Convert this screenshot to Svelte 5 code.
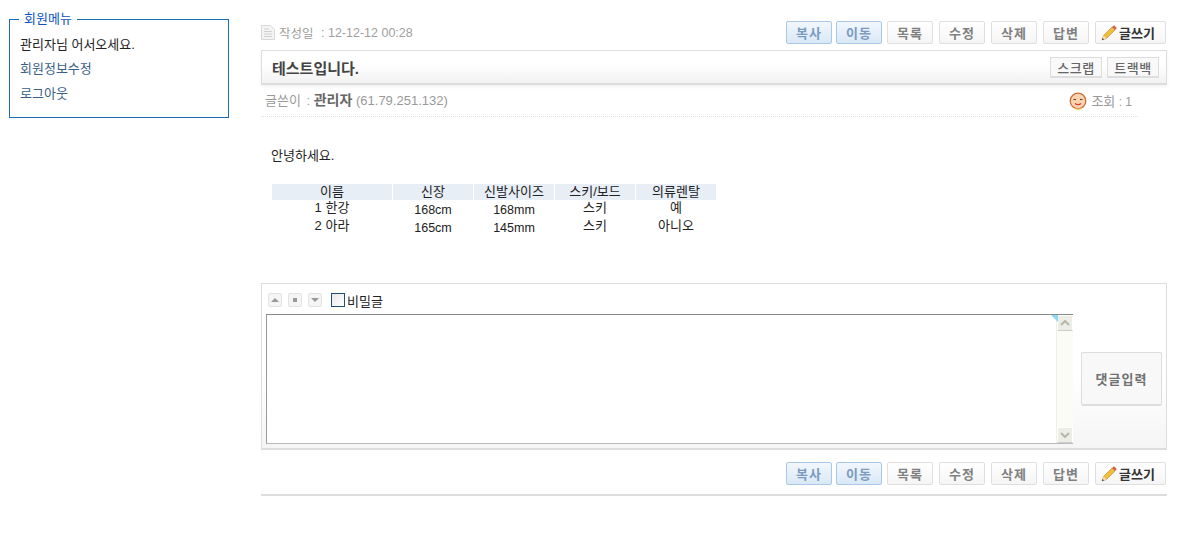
<script>
  const actions = [
    { label: '복사', tone: 'blue' },
    { label: '이동', tone: 'blue' },
    { label: '목록' },
    { label: '수정' },
    { label: '삭제' },
    { label: '답변' }
  ];

  const rows = [
    ['1 한강', '168cm', '168mm', '스키', '예'],
    ['2 아라', '165cm', '145mm', '스키', '아니오']
  ];
</script>

{#snippet toolbar()}
  <div class="actions">
    {#each actions as a}
      <button type="button" class="btn" class:blue={a.tone === 'blue'}>{a.label}</button>
    {/each}
    <button type="button" class="btn write">
      <svg width="16" height="16" viewBox="0 0 16 16">
        <path d="M1 15l1.500-4.500L11 2l3 3-8.500 8.500z" fill="#f3bd3a" stroke="#a9782a" stroke-width="0.5" />
        <path d="M11 2l1.300-1.300q.7-.5 1.300 0l1.700 1.700q.5.6 0 1.300L14 5z" fill="#d9604a" />
        <path d="M1 15l1.500-4.500 3 3z" fill="#f0dcb8" />
        <path d="M1 15l.6-2 1.400 1.400z" fill="#333" />
      </svg>
      글쓰기
    </button>
  </div>
{/snippet}

<div class="page">
  <aside class="side">
    <fieldset class="member">
      <legend>회원메뉴</legend>
      <p>관리자님 어서오세요.</p>
      <a href="#edit">회원정보수정</a>
      <a href="#logout">로그아웃</a>
    </fieldset>
  </aside>

  <main class="main">
    <div class="top">
      <span class="date">
        <svg class="doc" width="14" height="15" viewBox="0 0 14 15">
          <path d="M.5.5h9l4 4v10H.500z" fill="#f4f4f4" stroke="#d8d8d8" />
          <path d="M3 4h5M3 6.500h8M3 9h8M3 11.500h8" stroke="#d0d0d0" />
        </svg>
        <span class="ko">작성일</span> : 12-12-12 00:28
      </span>
      {@render toolbar()}
    </div>

    <div class="title">
      <h1>테스트입니다.</h1>
      <div class="title-btns">
        <button type="button" class="mini">스크랩</button>
        <button type="button" class="mini">트랙백</button>
      </div>
    </div>

    <div class="info">
      <span class="author"><span class="who">글쓴이</span> : <b>관리자</b> (61.79.251.132)</span>
      <span class="hits">
        <svg width="18" height="18" viewBox="0 0 18 18">
          <circle cx="9" cy="9" r="7.800" fill="#f9d3b0" stroke="#c9703a" stroke-width="1.300" />
          <path d="M5 16.500q4 1.500 8 0" fill="none" stroke="#f3d35a" stroke-width="1.200" />
          <path d="M4.500 7.500h2.500M11 7.500h2.500" stroke="#5a3a22" stroke-width="1.200" />
          <path d="M6 11.500q3 2.500 6 0" fill="none" stroke="#d8342a" stroke-width="1.200" />
        </svg>
        <span><span class="ko-13">조회</span> : 1</span>
      </span>
    </div>

    <div class="body">
      <p>안녕하세요.</p>
      <table>
        <thead>
          <tr>
            <th>이름</th>
            <th>신장</th>
            <th>신발사이즈</th>
            <th>스키/보드</th>
            <th>의류렌탈</th>
          </tr>
        </thead>
        <tbody>
          {#each rows as row}
            <tr>
              {#each row as cell}
                <td>{cell}</td>
              {/each}
            </tr>
          {/each}
        </tbody>
      </table>
    </div>

    <form class="comment">
      <div class="tools">
        <span class="tool"><i class="up"></i></span>
        <span class="tool"><i class="sq"></i></span>
        <span class="tool"><i class="down"></i></span>
        <label class="secret"><span class="check"></span>비밀글</label>
      </div>
      <div class="write-row">
        <div class="area">
          <textarea aria-label="댓글"></textarea>
          <div class="scroll">
            <span class="arrow">
              <svg width="10" height="6" viewBox="0 0 10 6"><path d="M1 5l4-4 4 4" fill="none" stroke="#b4b8aa" stroke-width="2" /></svg>
            </span>
            <span class="arrow">
              <svg width="10" height="6" viewBox="0 0 10 6"><path d="M1 1l4 4 4-4" fill="none" stroke="#b4b8aa" stroke-width="2" /></svg>
            </span>
          </div>
          <span class="corner"></span>
        </div>
        <button type="button" class="submit">댓글입력</button>
      </div>
    </form>

    <div class="bottom">
      {@render toolbar()}
    </div>
    <div class="rule"></div>
  </main>
</div>

<style>
  :global(body) {
    margin: 0;
    background: #fff;
    font-family: "Liberation Sans", "Noto Sans CJK KR", sans-serif;
    font-size: 12px;
    color: #222;
  }

  .page {
    display: flex;
    gap: 32px;
    padding: 12px 0 0 9px;
    align-items: flex-start;
  }

  .side {
    width: 220px;
    flex: none;
  }

  .member {
    margin: 0;
    padding: 10px 10px 11px;
    height: 106px;
    box-sizing: border-box;
    border: 1px solid #1a6db3;
    min-width: 0;
    font-size: 13px;
  }

  .member legend {
    margin-left: -1px;
    padding: 0 5px;
    color: #0a55bd;
    font-size: 13px;
    line-height: 14px;
  }

  .member p {
    margin: 0 0 6px;
    line-height: 18px;
    color: #222;
  }

  .member a {
    display: block;
    line-height: 18px;
    margin-bottom: 7px;
    color: #3a5f86;
    text-decoration: none;
  }

  .main {
    width: 906px;
    flex: none;
    padding-top: 9px;
  }

  .top {
    display: flex;
    justify-content: space-between;
    align-items: center;
    height: 23px;
  }

  .date {
    display: flex;
    align-items: center;
    gap: 4px;
    color: #a0a0a0;
    font-size: 12.500px;
    white-space: pre;
  }

  .actions {
    display: flex;
    gap: 4px;
    margin-right: 1px;
  }

  .btn {
    height: 23px;
    width: 46px;
    padding: 0;
    margin-left: 2px;
    box-sizing: border-box;
    border: 1px solid #dfdfdf;
    border-radius: 2px;
    background: linear-gradient(#fff, #f5f5f5);
    color: #808080;
    font: bold 13px "Noto Sans CJK KR", sans-serif;
    letter-spacing: 1px;
    line-height: 20px;
  }

  .btn.blue {
    margin-left: 0;
    border-color: #a9c8e6;
    background: linear-gradient(#f2f7fc, #d9e8f7);
    color: #7a9ac0;
  }

  .btn:nth-child(3) {
    margin-left: 1px;
  }

  .btn.write {
    width: 71px;
    display: flex;
    align-items: center;
    gap: 2px;
    padding-left: 5px;
    letter-spacing: 0;
    color: #333;
  }

  .title {
    margin-top: 6px;
    height: 35px;
    box-sizing: border-box;
    display: flex;
    justify-content: space-between;
    align-items: center;
    padding: 0 7px 0 10px;
    border: 1px solid #ddd;
    border-bottom-width: 2px;
    background: linear-gradient(#fff 40%, #f2f2f2);
    box-shadow: 0 2px 3px #f2f2f2;
  }

  .title h1 {
    margin: 0;
    font-size: 15px;
    font-weight: bold;
    color: #444;
  }

  .title-btns {
    display: flex;
    gap: 5px;
  }

  .mini {
    width: 52px;
    height: 21px;
    padding: 0;
    box-sizing: border-box;
    border: 1px solid #ddd;
    border-bottom-width: 2px;
    background: #f9f9f9;
    color: #666;
    font: 500 13px "Noto Sans CJK KR", sans-serif;
    letter-spacing: 0.500px;
  }

  .info {
    width: 877px;
    height: 32px;
    box-sizing: border-box;
    display: flex;
    justify-content: space-between;
    align-items: center;
    padding: 0 6px 0 4px;
    border-bottom: 1px dotted #ddd;
    color: #999;
    font-size: 13px;
  }

  .author {
    padding-bottom: 3px;
  }

  .who {
    font-size: 13px;
    margin-right: 2px;
  }

  .info b {
    color: #666;
    font-size: 14px;
  }

  .hits {
    display: flex;
    align-items: center;
    gap: 4px;
    font-size: 12px;
    white-space: pre;
  }

  .ko-13 {
    font-size: 13px;
  }

  .body {
    padding: 30px 0 0 10px;
    height: 166px;
    box-sizing: border-box;
    font-size: 13px;
  }

  .body p {
    margin: 0 0 19px;
    line-height: 18px;
  }

  table {
    margin-left: 0;
    border-collapse: separate;
    border-spacing: 1px 0;
    table-layout: fixed;
    width: 445px;
    font-size: 13px;
  }

  th {
    background: #e8eef6;
    font-weight: normal;
    height: 16px;
    padding: 0;
    line-height: 14px;
    width: 80px;
  }

  th:first-child {
    width: 120px;
  }

  td {
    padding: 0;
    height: 19px;
    line-height: 14px;
    vertical-align: top;
    text-align: center;
  }

  tbody tr:first-child td {
    padding-top: 1px;
    height: 18px;
  }

  td:nth-child(2),
  td:nth-child(3) {
    padding-top: 2px;
    height: 17px;
    font-size: 12.500px;
  }

  tbody tr:first-child td:nth-child(2),
  tbody tr:first-child td:nth-child(3) {
    padding-top: 3px;
    height: 16px;
  }

  .comment {
    height: 167px;
    box-sizing: border-box;
    padding: 6px 4px 5px;
    border: 1px solid #ddd;
    border-bottom-width: 2px;
    background: linear-gradient(#fff 55%, #f5f5f5);
  }

  .tools {
    display: flex;
    align-items: center;
    gap: 6px;
    height: 20px;
    padding-left: 2px;
    margin-bottom: 4px;
  }

  .tool {
    width: 14px;
    height: 14px;
    box-sizing: border-box;
    display: flex;
    align-items: center;
    justify-content: center;
    border: 1px solid #e2e2e2;
    border-radius: 2px;
    background: #f5f5f5;
  }

  .tool i {
    display: block;
  }

  .up {
    border: 4px solid transparent;
    border-top: 0;
    border-bottom: 4px solid #999;
  }

  .down {
    border: 4px solid transparent;
    border-bottom: 0;
    border-top: 4px solid #999;
  }

  .sq {
    width: 4px;
    height: 4px;
    background: #999;
  }

  .secret {
    display: flex;
    align-items: center;
    gap: 2px;
    margin-left: 3px;
    font-size: 13px;
  }

  .check {
    width: 12px;
    height: 12px;
    border: 1px solid #1f4e79;
    background: linear-gradient(135deg, #e8e8e8, #fff);
  }

  .write-row {
    display: flex;
    align-items: center;
    gap: 8px;
  }

  .area {
    position: relative;
    display: flex;
    width: 807px;
    height: 130px;
    box-sizing: border-box;
    border: 1px solid #999;
    border-top-color: #888;
    border-right: 0;
    border-bottom-color: #bbb;
    background: #fff;
  }

  textarea {
    flex: 1;
    border: 0;
    padding: 2px;
    resize: none;
    outline: none;
  }

  .scroll {
    width: 16px;
    display: flex;
    flex-direction: column;
    justify-content: space-between;
    background: #fbfcf5;
    border-left: 1px solid #eef0e4;
  }

  .arrow {
    height: 16px;
    display: flex;
    align-items: center;
    justify-content: center;
    background: #eceee6;
    border: 1px solid #fff;
    border-bottom-color: #ccc;
    box-sizing: border-box;
  }

  .corner {
    position: absolute;
    top: 0;
    right: 15px;
    width: 0;
    height: 0;
    border-top: 7px solid #8fd8f5;
    border-left: 7px solid transparent;
  }

  .submit {
    width: 81px;
    height: 54px;
    padding: 0;
    border: 1px solid #ddd;
    border-bottom-width: 2px;
    border-radius: 2px;
    background: #f8f8f8;
    color: #707070;
    font: bold 13px "Noto Sans CJK KR", sans-serif;
    letter-spacing: 1px;
  }

  .bottom {
    display: flex;
    justify-content: flex-end;
    margin-top: 12px;
  }

  .rule {
    margin-top: 9px;
    height: 2px;
    background: #ddd;
  }
</style>
